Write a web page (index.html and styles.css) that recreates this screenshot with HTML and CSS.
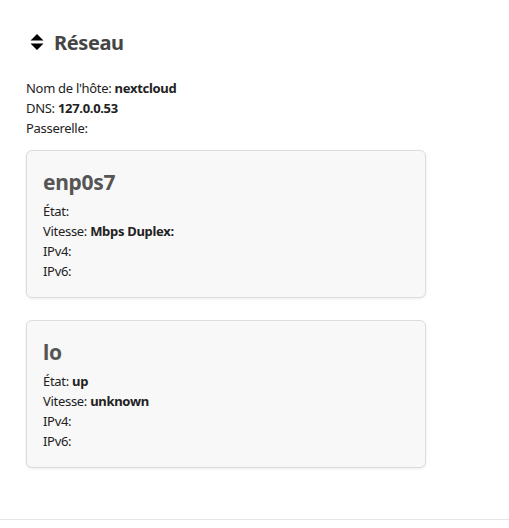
FILE: index.html
```html
<!DOCTYPE html>
<html lang="fr">
<head>
<meta charset="utf-8">
<title>Réseau</title>
<link rel="stylesheet" href="styles.css">
</head>
<body>
<main class="page">
  <section class="section">
    <h2 class="section-title">
      <svg class="sort-icon" width="14" height="16" viewBox="0 0 14 16" aria-hidden="true">
        <path d="M7 0 L13.5 6.5 H0.5 Z M0.5 9.5 H13.5 L7 16 Z" fill="#000"/>
      </svg>
      <span>Réseau</span>
    </h2>
    <div class="info">
      <p>Nom de l'hôte: <strong>nextcloud</strong></p>
      <p>DNS: <strong>127.0.0.53</strong></p>
      <p>Passerelle: </p>
    </div>
    <div class="cards">
      <div class="card">
        <h3 class="card-title">enp0s7</h3>
        <p>État: </p>
        <p>Vitesse: <strong>Mbps Duplex:</strong></p>
        <p>IPv4: </p>
        <p>IPv6: </p>
      </div>
      <div class="card">
        <h3 class="card-title">lo</h3>
        <p>État: <strong>up</strong></p>
        <p>Vitesse: <strong>unknown</strong></p>
        <p>IPv4: </p>
        <p>IPv6: </p>
      </div>
    </div>
  </section>
</main>
</body>
</html>
```
FILE: styles.css
```css
html, body {
  margin: 0;
  padding: 0;
  background: #fff;
}
body {
  font-family: "Noto Sans", "Open Sans", sans-serif;
  font-size: 13px;
  letter-spacing: -0.3px;
  color: #222;
}
.page {
  border-bottom: 1px solid #e6e6e6;
  padding-bottom: 51px;
}
.section {
  padding: 30px 0 0 26px;
}
.section-title {
  display: flex;
  align-items: center;
  margin: 0 0 24px 4px;
  font-size: 20px;
  font-weight: 700;
  letter-spacing: -0.4px;
  color: #454545;
  height: 24px;
}
.sort-icon {
  margin-right: 10px;
}
.info p,
.card p {
  margin: 0;
  line-height: 20px;
}
strong {
  font-weight: 700;
}
.info {
  margin-bottom: 12px;
}
.cards {
  display: flex;
  flex-direction: column;
  gap: 22px;
  width: 400px;
}
.card {
  background: #f8f8f8;
  border: 1px solid #dcdcdc;
  border-radius: 6px;
  box-shadow: 0 1px 3px rgba(0,0,0,0.08);
  padding: 16px 16px 18px 16px;
  box-sizing: border-box;
  height: 148px;
}
.card-title {
  margin: 0 0 4px 0;
  font-size: 21px;
  font-weight: 700;
  letter-spacing: -0.3px;
  color: #555;
  line-height: 30px;
}
```
